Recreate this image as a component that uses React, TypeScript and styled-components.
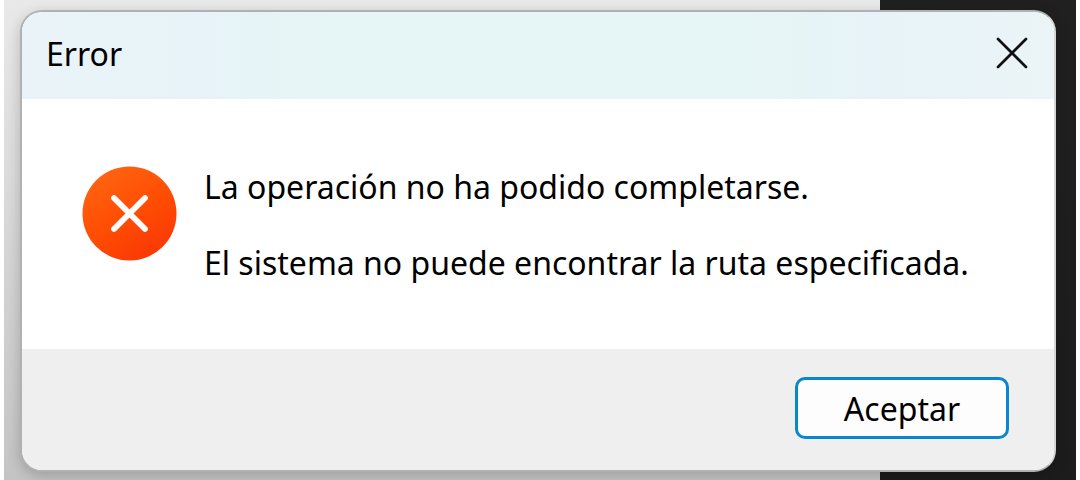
import React from 'react';
import styled, { createGlobalStyle } from 'styled-components';

const GlobalStyle = createGlobalStyle`
  * { box-sizing: border-box; }
  body { margin: 0; background: #fff; font-family: "Noto Sans", "Open Sans", sans-serif; color: #000; }
`;

const Desktop = styled.main`
  display: flex;
  min-height: 100vh;
  padding: 10px 24px 8px 20px;
  background:
    linear-gradient(#fff, #fff) left / 4px 100% no-repeat,
    linear-gradient(#fff, #fff) right / 4px 100% no-repeat,
    linear-gradient(#202020, #1c1c1c) right / 200px 100% no-repeat,
    linear-gradient(#e9e9e9, #c4c4c4);
`;

const Dialog = styled.section`
  display: flex;
  flex-direction: column;
  flex: 1;
  min-width: 0;
  border: 2px solid #b0b2b2;
  border-right-color: #d4d6d6;
  border-radius: 22px;
  background: #fff;
  overflow: hidden;
  box-shadow: 0 4px 14px rgba(0, 0, 0, 0.2);
`;

const TitleBar = styled.header`
  display: flex;
  align-items: center;
  justify-content: space-between;
  height: 87px;
  padding: 0 24px 4px;
  background: linear-gradient(90deg, #eaf4f8, #e7f3f8 18%, #e6f5f5 30%, #e6f5f5 70%, #e7f3f8 82%, #ebf4f7);
`;

const Title = styled.h1`
  margin: 0;
  font-size: 32px;
  font-weight: 400;
  line-height: 40px;
`;

const CloseButton = styled.button`
  display: flex;
  padding: 0;
  border: 0;
  background: none;
  color: #111;
`;

const Content = styled.div`
  display: flex;
  flex: 1;
  gap: 27px;
  padding: 67px 60px 66px;
`;

const Message = styled.div`
  display: flex;
  flex-direction: column;
  gap: 36px;
  padding-top: 1px;
  font-size: 32px;
  line-height: 40px;
  white-space: nowrap;
`;

const Line = styled.p`
  margin: 0;
`;

const Actions = styled.footer`
  display: flex;
  justify-content: flex-end;
  padding: 28px 45px 31px;
  background: #efefef;
`;

const AcceptButton = styled.button`
  width: 214px;
  height: 62px;
  padding: 2px 0 0;
  border: 3px solid #0886cf;
  border-radius: 10px;
  background: #fdfdfd;
  color: inherit;
  font: inherit;
  font-size: 32px;
  line-height: 40px;
`;

export default function App() {
  return (
    <Desktop>
      <GlobalStyle />
      <Dialog role="alertdialog" aria-labelledby="title" aria-describedby="message">
        <TitleBar>
          <Title id="title">Error</Title>
          <CloseButton aria-label="Cerrar">
            <svg width="36" height="36" viewBox="0 0 36 36" fill="none" stroke="currentColor" strokeWidth="2.7" strokeLinecap="round">
              <path d="M4 3 32 31M32 3 4 31" />
            </svg>
          </CloseButton>
        </TitleBar>
        <Content>
          <svg width="95" height="95" viewBox="0 0 95 95" fill="none" aria-hidden="true">
            <defs>
              <linearGradient id="fill" x1="0.2" y1="0" x2="0.8" y2="1">
                <stop stopColor="#ff6611" />
                <stop offset="0.55" stopColor="#ff4b03" />
                <stop offset="1" stopColor="#f93605" />
              </linearGradient>
            </defs>
            <circle cx="47.5" cy="47.5" r="47" fill="url(#fill)" />
            <path d="M32 32 63 63M63 32 32 63" stroke="#fff" strokeWidth="5.8" strokeLinecap="round" />
          </svg>
          <Message id="message">
            <Line>La operación no ha podido completarse.</Line>
            <Line>El sistema no puede encontrar la ruta especificada.</Line>
          </Message>
        </Content>
        <Actions>
          <AcceptButton>Aceptar</AcceptButton>
        </Actions>
      </Dialog>
    </Desktop>
  );
}
